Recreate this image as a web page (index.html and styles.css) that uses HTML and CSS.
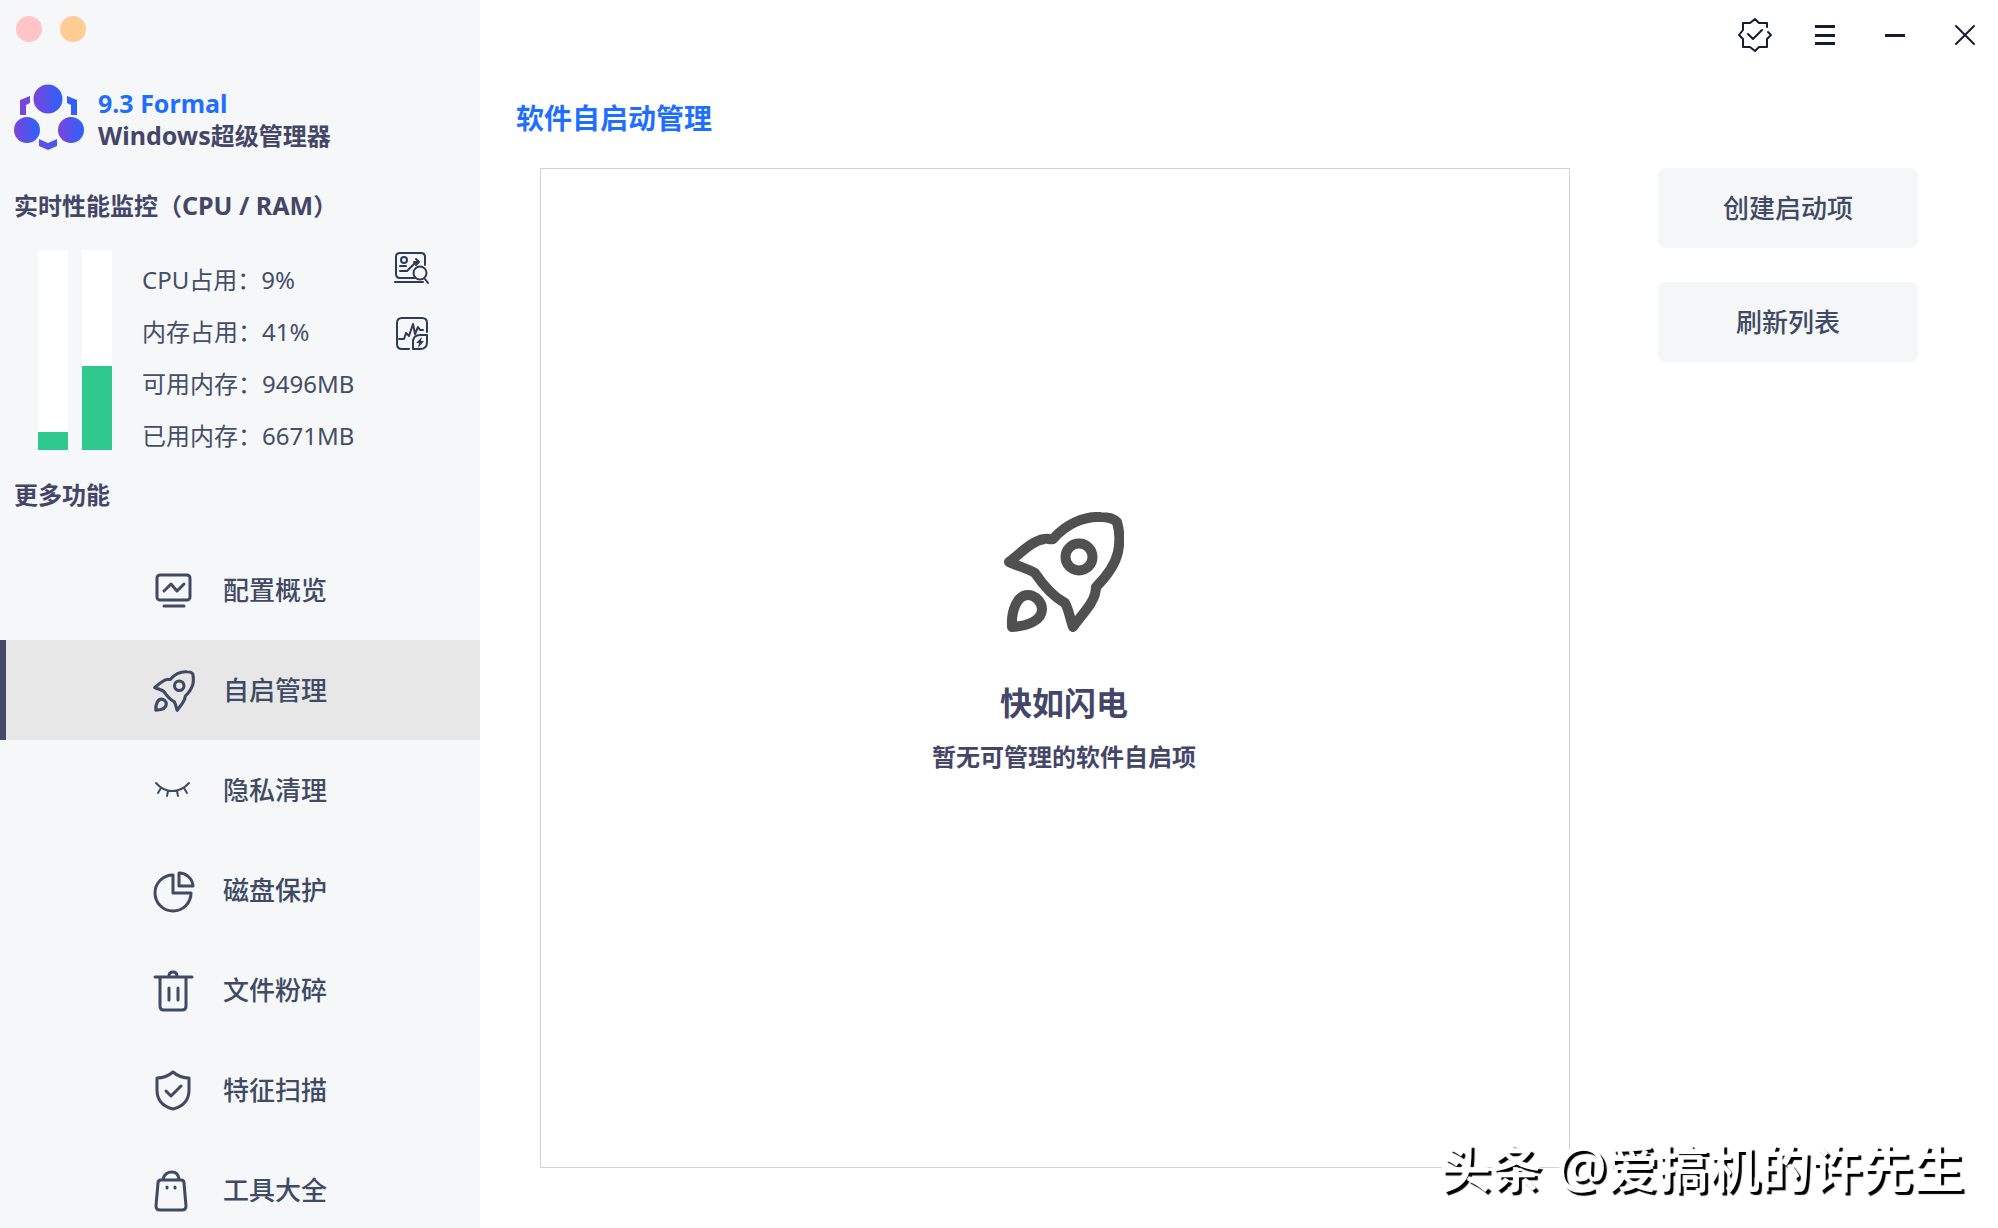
FILE: index.html
```html
<!DOCTYPE html>
<html lang="zh-CN">
<head>
<meta charset="utf-8">
<title>Windows超级管理器</title>
<link rel="stylesheet" href="styles.css">
</head>
<body>
<svg class="defs" aria-hidden="true">
  <defs>
    <linearGradient id="brand" x1="0" y1="0" x2="1" y2="0"><stop offset="0" stop-color="#7b45d8"/><stop offset="1" stop-color="#2a62ff"/></linearGradient>
    <symbol id="rocket" viewBox="0 0 120 120">
      <path d="M5 50C18 40 28 29 40 27C44 26 46 28 49 27C62 12 80 4 97 5C105 5 110 7 113 10C116 20 116 30 114 40C111 54 102 65 92 75C92 90 78 102 69 115C66 107 65 98 61 91C48 84 39 73 31 61C23 56 13 54 5 50Z"/>
      <circle cx="75" cy="45" r="13.500"/>
      <path d="M8 115C7 99 13 83 24 83C31 83 38 90 38 97C38 109 23 114 8 115Z"/>
    </symbol>
  </defs>
</svg>
<div class="app">
  <aside class="sidebar">
    <div class="dots"><span class="dot dot-red"></span><span class="dot dot-orange"></span></div>
    <header class="brand">
      <svg class="logo" viewBox="0 0 72 70" aria-hidden="true">
        <circle cx="35" cy="16" r="14.500"/><circle cx="14" cy="47" r="13"/><circle cx="58" cy="47" r="13"/>
        <path d="M7 17L17 13V20L13 22V32H7ZM54 13L64 17V32H58V22L54 20ZM26 56L35 60L44 56V63L35 67L26 63Z"/>
      </svg>
      <div class="brand-text"><span class="version latin">9.3 Formal</span><span><span class="latin">Windows</span>超级管理器</span></div>
    </header>
    <h2 class="section-title">实时性能监控（<span class="latin">CPU / RAM</span>）</h2>
    <section class="monitor">
      <div class="bars">
        <div class="bar"><div class="fill" style="height:9%"></div></div>
        <div class="bar"><div class="fill" style="height:42%"></div></div>
      </div>
      <ul class="stats">
        <li>CPU占用：9%</li><li>内存占用：41%</li><li>可用内存：9496MB</li><li>已用内存：6671MB</li>
      </ul>
      <div class="tools">
        <button class="tool" aria-label="性能分析"><svg viewBox="0 0 36 36"><path d="M21 28H6Q2 28 2 24V7Q2 3 6 3H27Q31 3 31 7V15M1 32H29M6 16H12M6 21H13L22 12M20 12H25L22 9M25 12L22 15M31 29L34 33"/><circle cx="10" cy="10" r="3"/><circle cx="26" cy="23" r="6.500"/></svg></button>
        <button class="tool" aria-label="性能加速"><svg viewBox="0 0 36 36"><path d="M15 33H8Q3 33 3 28V7Q3 2 8 2H28Q33 2 33 7V16M5 23H10L12 17L15 20L19 8L21 18L24 11L26 14H29M26 19H33V26Q33 33 26 33H19V26Q19 19 26 19Z"/><path class="solid" d="M28 21L22 27H25L24 32L30 25H27Z"/></svg></button>
      </div>
    </section>
    <h2 class="section-title more">更多功能</h2>
    <nav class="menu">
      <a class="item" href="#"><svg viewBox="0 0 42 42"><rect x="5" y="6" width="33" height="25" rx="3"/><path d="M12 22L19 15L25 22L32 15M12 37H32"/></svg><span>配置概览</span></a>
      <a class="item active" href="#" aria-current="page"><svg viewBox="0 0 42 42"><svg x="1" y="1" width="40" height="40" class="small-rocket"><use href="#rocket"/></svg></svg><span>自启管理</span></a>
      <a class="item" href="#"><svg class="thin" viewBox="0 0 42 42"><path d="M4 14Q11 22 20 22Q30 22 37 14M9 19L6 24M16 22L15 27M25 22L26 27M32 19L35 24"/></svg><span>隐私清理</span></a>
      <a class="item" href="#"><svg viewBox="0 0 42 42"><path d="M21 6A18 18 0 1 0 39 24H21ZM27 4V17H41A14 14 0 0 0 27 4Z"/></svg><span>磁盘保护</span></a>
      <a class="item" href="#"><svg viewBox="0 0 42 42"><path d="M3 8H40M8 8V37Q8 41 12 41H30Q34 41 34 37V8M17 7Q17 3 21 3Q25 3 25 7M17 19V31M26 19V31"/></svg><span>文件粉碎</span></a>
      <a class="item" href="#"><svg viewBox="0 0 42 42"><path d="M21 3Q28 9 37 9V21Q37 36 21 40Q5 36 5 21V9Q14 9 21 3ZM14 22L19 27L29 17"/></svg><span>特征扫描</span></a>
      <a class="item" href="#"><svg viewBox="0 0 42 42"><path d="M9 11H29Q32 11 32 14L34 37Q34 41 30 41H8Q4 41 4 37L6 14Q6 11 9 11ZM11 10Q13 3 20 3Q26 3 27 10M15 18V19M23 18V19"/></svg><span>工具大全</span></a>
    </nav>
  </aside>
  <main class="main">
    <div class="titlebar">
      <button class="win" aria-label="认证"><svg viewBox="0 0 36 36"><path d="M30 10V6H22L18 2L13 6H6V13L2 18L6 22V30H13L18 34L22 30H30V22L34 18L31 15M11 17L16 22L25 13"/></svg></button>
      <button class="win bold" aria-label="菜单"><svg viewBox="0 0 36 36"><path d="M8 9.500H28M8 18.500H28M8 26.500H28"/></svg></button>
      <button class="win bold" aria-label="最小化"><svg viewBox="0 0 36 36"><path d="M8 18.500H28"/></svg></button>
      <button class="win" aria-label="关闭"><svg viewBox="0 0 36 36"><path d="M9 9L27 27M27 9L9 27"/></svg></button>
    </div>
    <h1 class="page-title">软件自启动管理</h1>
    <div class="content">
      <section class="panel">
        <svg class="hero" aria-hidden="true"><use href="#rocket"/></svg>
        <h3 class="empty-title">快如闪电</h3>
        <p class="empty-text">暂无可管理的软件自启项</p>
      </section>
      <div class="actions"><button class="action">创建启动项</button><button class="action">刷新列表</button></div>
    </div>
  </main>
  <div class="watermark">头条<span class="at"> @</span>爱搞机的许先生</div>
</div>
</body>
</html>
```
FILE: styles.css
```css
* { box-sizing: border-box; }
body { margin: 0; background: #fff; color: #444668; font-family: "Noto Sans", "Noto Sans CJK SC", sans-serif; }
h1, h2, h3, p, ul { margin: 0; padding: 0; }
button { border: 0; padding: 0; background: none; font: inherit; color: inherit; cursor: pointer; }
svg { display: block; fill: none; stroke: currentColor; stroke-linecap: round; stroke-linejoin: round; }
.defs { position: absolute; width: 0; height: 0; }
.app { position: relative; display: flex; height: 100vh; overflow: hidden; }

.sidebar { flex: 0 0 480px; background: #f5f7f9; padding-top: 16px; overflow: hidden; }
.dots { display: flex; gap: 18px; padding-left: 16px; }
.dot { width: 26px; height: 26px; border-radius: 50%; }
.dot-red { background: #ffc5c6; }
.dot-orange { background: #ffcd94; }
.brand { display: flex; gap: 13px; padding: 41px 0 0 13px; }
.logo { width: 72px; height: 70px; stroke: none; fill: url(#brand); }
.brand-text { display: flex; flex-direction: column; padding-top: 4px; font-size: 24px; line-height: 32px; font-weight: 700; }
.version { color: #1f6fff; }
.latin { font-size: 25px; }
.section-title { padding: 36px 0 0 14px; font-size: 24px; line-height: 32px; font-weight: 700; }
.section-title.more { padding-top: 29px; }
.monitor { display: flex; padding: 28px 0 0 38px; }
.bars { display: flex; gap: 14px; height: 200px; }
.bar { display: flex; align-items: flex-end; width: 30px; background: #fff; }
.fill { width: 100%; background: #2fc88d; }
.stats { list-style: none; width: 248px; padding: 4px 0 0 30px; font-size: 24px; line-height: 52px; color: #454e68; height: 200px; white-space: nowrap; }
.tools { display: flex; flex-direction: column; gap: 30px; padding-left: 34px; }
.tool { width: 36px; height: 36px; color: #303a56; }
.tool svg { stroke-width: 2; }
.tool .solid { fill: currentColor; stroke: none; }
.menu { padding-top: 29px; }
.item { display: flex; align-items: center; gap: 29px; height: 100px; padding-left: 152px; border-left: 0 solid #444c66; color: #404a64; font-size: 26px; font-weight: 500; line-height: 36px; text-decoration: none; }
.item svg { width: 42px; height: 42px; stroke-width: 3; overflow: visible; }
.item svg.thin { stroke-width: 2; }
.item span { padding-bottom: 1px; }
.item.active { padding-left: 146px; border-left-width: 6px; background: #e7e7e7; }
.item .small-rocket { stroke-width: 9; }

.main { flex: 1; min-width: 0; display: flex; flex-direction: column; padding-bottom: 60px; }
.titlebar { display: flex; justify-content: flex-end; gap: 34px; padding: 17px 15px 0 0; height: 100px; }
.win { width: 36px; height: 36px; color: #171d30; }
.win svg { stroke-width: 2; }
.win.bold svg { stroke-width: 3; stroke-linecap: butt; }
.page-title { padding-left: 36px; font-size: 28px; line-height: 36px; color: #1f6fff; }
.content { flex: 1; display: flex; gap: 88px; padding: 32px 80px 0 60px; }
.panel { flex: 1; display: flex; flex-direction: column; align-items: center; padding: 343px 0 0 18px; border: 1px solid #cfd2dc; }
.hero { width: 120px; height: 120px; color: #505050; stroke-width: 10; overflow: visible; }
.empty-title { padding-top: 47px; font-size: 32px; line-height: 48px; }
.empty-text { padding-top: 14px; font-size: 24px; line-height: 32px; font-weight: 700; }
.actions { width: 260px; display: flex; flex-direction: column; gap: 34px; }
.action { height: 80px; padding-bottom: 3px; border-radius: 8px; background: #f5f6f8; color: #404a64; font-size: 26px; font-weight: 500; }
.watermark { position: absolute; right: 34px; bottom: 24px; color: #fff; font-size: 51px; font-weight: 500; line-height: 72px; white-space: nowrap; text-shadow: -1px -1px 1px #fff, 3px 3px 1px #000; }
.at { font-size: 56px; font-weight: 400; }
```
